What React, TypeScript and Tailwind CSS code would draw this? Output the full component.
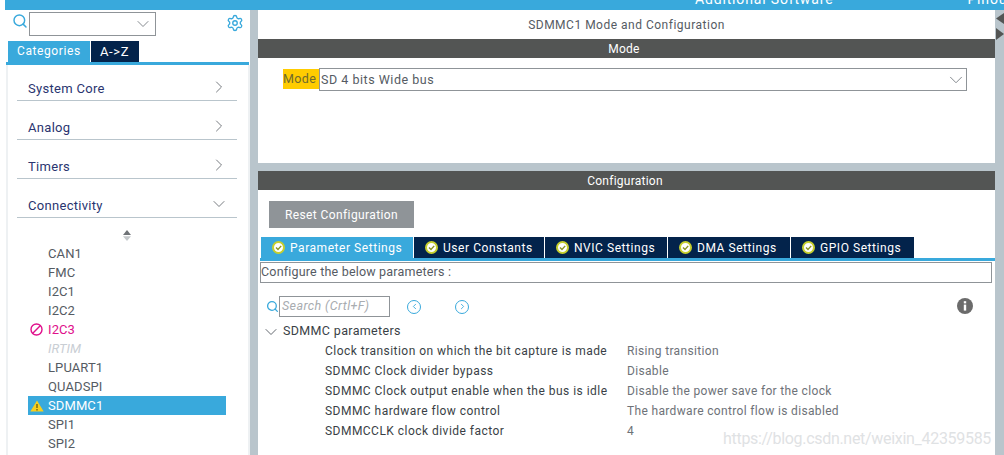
import { ChevronDown, ChevronLeft, ChevronRight, Search, Settings } from "lucide-react";

const font = { fontFamily: "Roboto, 'Liberation Sans', sans-serif" };

const categories = [
  { name: "System Core", open: false },
  { name: "Analog", open: false },
  { name: "Timers", open: false },
  { name: "Connectivity", open: true },
];

const peripherals = ["CAN1", "FMC", "I2C1", "I2C2", "I2C3", "IRTIM", "LPUART1", "QUADSPI", "SDMMC1", "SPI1", "SPI2"];

const tabs = [
  { label: "Parameter Settings", w: "w-[152px]", active: true },
  { label: "User Constants", w: "w-[130px]", active: false },
  { label: "NVIC Settings", w: "w-[122px]", active: false },
  { label: "DMA Settings", w: "w-[122px]", active: false },
  { label: "GPIO Settings", w: "w-[123px]", active: false },
];

const params = [
  ["Clock transition on which the bit capture is made", "Rising transition"],
  ["SDMMC Clock divider bypass", "Disable"],
  ["SDMMC Clock output enable when the bus is idle", "Disable the power save for the clock"],
  ["SDMMC hardware flow control", "The hardware control flow is disabled"],
  ["SDMMCCLK clock divide factor", "4"],
];

function CheckDot() {
  return (
    <svg width="13" height="13" viewBox="0 0 13 13" className="shrink-0">
      <circle cx="6.5" cy="6.5" r="5.5" fill="#fff" stroke="#c6cf2e" strokeWidth="2" />
      <path d="M4 6.5l2 2 3.2-3.6" fill="none" stroke="#8a9420" strokeWidth="1.4" />
    </svg>
  );
}

function Peripheral({ name }: { name: string }) {
  const selected = name === "SDMMC1";
  const denied = name === "I2C3";
  const disabled = name === "IRTIM";
  return (
    <div className={`flex h-[19px] w-[198px] items-center ${selected ? "bg-[#39a9dc] text-white" : "text-[#555b63]"}`}>
      <div className="mr-[3px] flex w-[17px] shrink-0 items-center justify-center">
        {denied && (
          <svg width="13" height="13" viewBox="0 0 13 13">
            <circle cx="6.5" cy="6.5" r="5.5" fill="none" stroke="#e0108c" strokeWidth="1.4" />
            <path d="M2.8 10.2L10.2 2.8" stroke="#e0108c" strokeWidth="1.4" />
          </svg>
        )}
        {selected && (
          <svg width="14" height="12" viewBox="0 0 14 12">
            <path d="M7 0.5L13.7 11.5H0.3Z" fill="#f7cf1d" />
            <path d="M7 4v4M7 9v1.4" stroke="#5c5210" strokeWidth="1.2" />
          </svg>
        )}
      </div>
      <span className={denied ? "text-[#e0108c]" : disabled ? "italic text-[#c9ced4]" : ""}>{name}</span>
    </div>
  );
}

function Sidebar() {
  return (
    <aside className="flex h-full w-[245px] shrink-0 flex-col overflow-hidden bg-white">
      <div className="flex h-[31px] shrink-0 items-start pl-[7px] pr-[6px] pt-[2px]">
        <Search size={16} strokeWidth={2.2} className="mt-[1px] shrink-0 text-[#39a9dc]" />
        <div className="ml-[1px] flex h-[24px] w-[127px] items-center justify-end border border-[#8f9498] pr-[2px]">
          <ChevronDown size={20} strokeWidth={1.1} className="text-[#7a7f84]" />
        </div>
        <Settings size={18} strokeWidth={1.8} className="ml-auto mt-[2px] text-[#39a9dc]" />
      </div>
      <div className="flex h-[21px] shrink-0 pl-[3px] text-[12px] leading-[21px] tracking-[0.6px] text-white">
        <div className="w-[82px] bg-[#39a9dc] pl-[9px]">Categories</div>
        <div className="ml-[1px] w-[48px] bg-[#03234b] pl-[9px] text-[13px]">A-&gt;Z</div>
      </div>
      <div className="ml-[1px] h-[3px] w-[243px] shrink-0 bg-[#39a9dc]" />
      <div className="ml-[1px] min-h-0 flex-1 border-l-2 border-r-2 border-[#eef1f3] pl-[9px] pr-[11px] text-[13px]">
        {categories.map((c) => (
          <div key={c.name} className="flex h-[39px] items-end justify-between border-b border-[#b9c5cc] pb-[2px] pl-[11px] pr-[9px] text-[#2a3570] first:h-[36px]">
            <span className="tracking-[0.3px]">{c.name}</span>
            {c.open ? (
              <ChevronDown size={20} strokeWidth={1.1} className="mb-[1px] mr-[-1px] text-[#6b7075]" />
            ) : (
              <ChevronRight size={20} strokeWidth={1.1} className="mb-[1px] mr-[-1px] text-[#6b7075]" />
            )}
          </div>
        ))}
        <div className="flex h-[26px] items-center justify-center pr-[1px] pt-[9px]">
          <svg width="8" height="11" viewBox="0 0 8 11">
            <path d="M4 0L8 5H0Z" fill="#6f7377" />
            <path d="M4 11L0 6.2H8Z" fill="#c4c8cb" />
          </svg>
        </div>
        <div className="ml-[11px] tracking-[0.1px]">
          {peripherals.map((p) => (
            <Peripheral key={p} name={p} />
          ))}
        </div>
      </div>
    </aside>
  );
}

function ModePanel() {
  return (
    <section className="h-[153px] shrink-0 bg-white">
      <div className="flex h-[29px] items-center justify-center pt-[1px] text-[12px] tracking-[0.5px] text-[#555b63]">
        SDMMC1 Mode and Configuration
      </div>
      <div className="flex h-[19px] items-center justify-center bg-[#535554] pr-[5px] text-[12px] tracking-[0.2px] text-white">Mode</div>
      <div className="flex items-start pl-[25px] pt-[10px] text-[12.5px] tracking-[0.35px]">
        <div className="mt-[1px] flex h-[20px] w-[36px] items-center bg-[#ffcc00] pt-[1px] text-[#6e6a2e]">Mode</div>
        <div className="flex h-[23px] w-[648px] items-center justify-between border border-[#8f9498] pl-[1px] tracking-[0.52px] text-[#555b63]">
          <span className="pt-[1px]">SD 4 bits Wide bus</span>
          <ChevronDown size={22} strokeWidth={1} className="mr-[-1px] text-[#7a7f84]" />
        </div>
      </div>
    </section>
  );
}

function ConfigPanel() {
  return (
    <section className="relative flex-1 overflow-hidden bg-white text-[12.5px] tracking-[0.35px]">
      <div className="flex h-[19px] items-center justify-center bg-[#535554] pr-[3px] text-[12px] tracking-[0.25px] text-white">Configuration</div>
      <div className="ml-[11px] mt-[11px] flex h-[27px] w-[145px] items-center justify-center bg-[#8f9498] text-[12px] tracking-[0.4px] text-white">
        Reset Configuration
      </div>
      <div className="ml-[3px] mt-[9px] flex h-[21px] gap-px text-[12px] tracking-[0.55px] text-white">
        {tabs.map((t) => (
          <div key={t.label} className={`flex items-center gap-[5px] pl-[11px] ${t.w} ${t.active ? "bg-[#39a9dc]" : "bg-[#03234b]"}`}>
            <CheckDot />
            <span className="pt-[1px]">{t.label}</span>
          </div>
        ))}
      </div>
      <div className="ml-[2px] h-[3px] w-[735px] bg-[#39a9dc]" />
      <div className="ml-[2px] mt-[1px] flex h-[21px] w-[732px] items-center border border-[#8f9498] tracking-[0.19px] text-[#555b63]">Configure the below parameters :</div>
      <div className="ml-[8px] mt-[13px] flex h-[21px] items-center">
        <Search size={13} strokeWidth={2.4} className="shrink-0 text-[#39a9dc]" />
        <div className="flex h-[21px] w-[111px] items-center border border-[#8f9498] pl-[2px] text-[12.5px] italic tracking-[0.4px] text-[#a8acb0]">
          Search (Crtl+F)
        </div>
        <div className="ml-[17px] flex h-[14px] w-[14px] items-center justify-center rounded-full border-[1.5px] border-[#39a9dc] text-[#39a9dc]">
          <ChevronLeft size={9} strokeWidth={2.4} />
        </div>
        <div className="ml-[34px] flex h-[14px] w-[14px] items-center justify-center rounded-full border-[1.5px] border-[#39a9dc] text-[#39a9dc]">
          <ChevronRight size={9} strokeWidth={2.4} />
        </div>
        <svg width="16" height="16" viewBox="0 0 16 16" className="mb-[1px] ml-[488px]">
          <circle cx="8" cy="8" r="8" fill="#6b6b6b" />
          <rect x="6.8" y="6.6" width="2.4" height="6" fill="#fff" />
          <rect x="6.8" y="3.2" width="2.4" height="2.2" fill="#fff" />
        </svg>
      </div>
      <div className="ml-[3px] mt-[5px] flex h-[19px] items-center text-[#3a3f46]">
        <ChevronDown size={20} strokeWidth={1.1} className="text-[#555b63]" />
        <span className="ml-[2px]">SDMMC parameters</span>
      </div>
      <div className="ml-[67px] text-[12px]">
        {params.map(([label, value]) => (
          <div key={label} className="flex h-[20px] items-center">
            <span className="w-[302px] shrink-0 tracking-[0.47px] text-[#3a3f46]">{label}</span>
            <span className="tracking-[0.34px] text-[#6e7278]">{value}</span>
          </div>
        ))}
      </div>
      <div className="absolute left-[465px] top-[256px] whitespace-nowrap text-[16px] tracking-[-0.3px] text-[#dfe2e4]">https://blog.csdn.net/weixin_42359585</div>
    </section>
  );
}

export default function App() {
  return (
    <div className="flex h-[455px] w-[1004px] flex-col overflow-hidden bg-white" style={font}>
      <header className="ml-[5px] flex h-[10px] shrink-0 overflow-hidden whitespace-nowrap bg-[#39a9dc] text-[14px] leading-[10px] text-white">
        <span className="ml-[690px] mt-[-6px] shrink-0 tracking-[0.84px]">Additional Software</span>
        <span className="ml-[134px] mt-[-6px] shrink-0 tracking-[0.84px]">Pinout</span>
      </header>
      <div className="flex min-h-0 flex-1 pl-[5px]">
        <Sidebar />
        <div className="flex w-[754px] shrink-0 bg-[#b9c5cc] pl-[8px]">
          <div className="flex w-[737px] shrink-0 flex-col gap-[8px]">
            <ModePanel />
            <ConfigPanel />
          </div>
          <div className="flex flex-1 flex-col items-center pt-[3px]">
            <svg width="8" height="11" viewBox="0 0 8 11">
              <path d="M8 0V11L0 5.5Z" fill="#535554" />
            </svg>
            <svg width="8" height="12" viewBox="0 0 8 12" className="mt-[4px]">
              <path d="M0 0V12L8 6Z" fill="#535554" />
            </svg>
          </div>
        </div>
      </div>
    </div>
  );
}
